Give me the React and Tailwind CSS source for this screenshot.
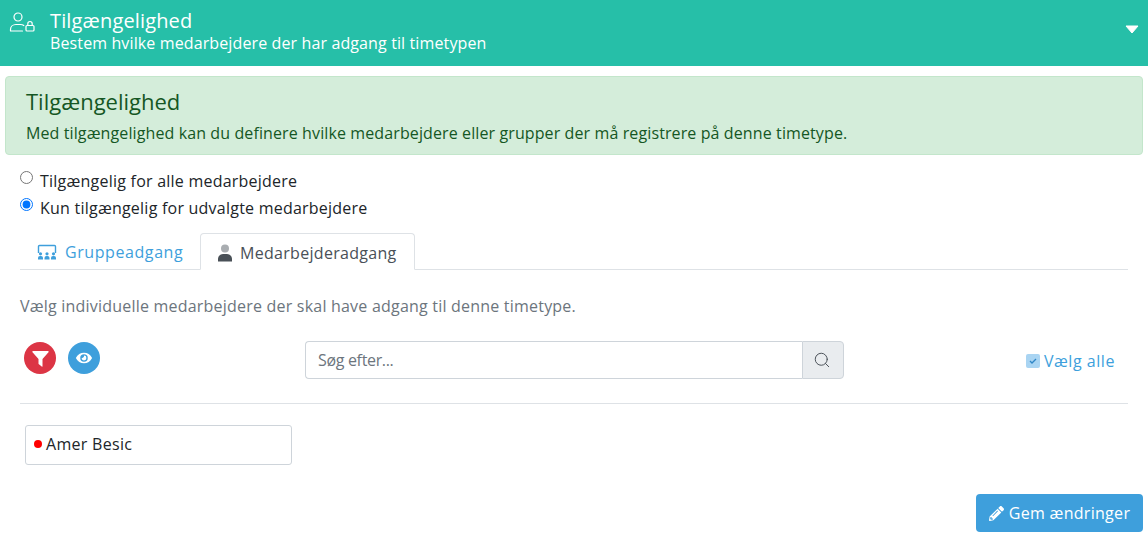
import { Search } from 'lucide-react'
import { FaPencilAlt } from 'react-icons/fa'

const UserLockIcon = () => (
  <svg width="28" height="24" viewBox="0 0 28 24" fill="none" stroke="white" strokeWidth="1.2" className="shrink-0 mt-[1px]">
    <circle cx="9" cy="7" r="4" />
    <path d="M1.5 21v-1.5c0-3 2.500-5 5.500-5h4.500c1.500 0 2.500.4 3.300 1M1.500 21h12" strokeLinecap="round" />
    <rect x="17" y="15.500" width="8" height="5.500" rx="1" />
    <path d="M18.800 15.500v-1.800a2.200 2.200 0 0 1 4.400 0v1.800" />
  </svg>
)

const GroupIcon = () => (
  <svg width="20" height="16" viewBox="0 0 20 16" className="shrink-0">
    <path d="M1.500 9V2.500a1 1 0 0 1 1-1h15a1 1 0 0 1 1 1V9" fill="none" stroke="#3e9fdc" strokeWidth="1.400" />
    {[3.500, 10, 16.500].map((x) => (
      <g key={x} fill="#3e9fdc">
        <circle cx={x} cy="9.800" r="1.600" />
        <path d={`M${x - 2.500} 15.500v-1.500a2 2 0 0 1 2-2h1a2 2 0 0 1 2 2v1.500z`} />
      </g>
    ))}
  </svg>
)

const PersonIcon = () => (
  <svg width="16" height="18" viewBox="0 0 16 18" className="shrink-0">
    <circle cx="8" cy="4.500" r="4" fill="#a9adb1" />
    <path d="M1 17.500v-2.500c0-3 2.500-5 5-5h4c2.500 0 5 2 5 5v2.500z" fill="#495057" />
  </svg>
)

const FunnelIcon = () => (
  <svg width="17" height="17" viewBox="0 0 17 17" fill="white">
    <path d="M1 1h15a.7.7 0 0 1 .5 1.200L10.500 9v7.200a.5.5 0 0 1-.8.4l-2.800-2.300a.8.8 0 0 1-.4-.7V9L.5 2.200A.7.7 0 0 1 1 1z" />
  </svg>
)

const EyeIcon = () => (
  <svg width="18" height="12" viewBox="0 0 20 14">
    <path d="M.5 7C2.500 3 6 .8 10 .8S17.500 3 19.500 7c-2 4-5.500 6.200-9.500 6.200S2.500 11 .5 7z" fill="white" />
    <circle cx="10" cy="7" r="4.400" fill="#3e9fdc" />
    <path d="M10 4.200A2.800 2.800 0 1 1 7.200 7c1 .5 3.300-.5 2.800-2.800z" fill="white" />
  </svg>
)

export default function App() {
  return (
    <div className="w-[1148px] h-[539px] overflow-hidden bg-white text-[16px] text-[#212529] font-['Open_Sans',sans-serif]">
      {/* Header */}
      <div className="h-[66px] bg-[#26bfa8] flex justify-between text-white">
        <div className="flex pl-[9px] pt-[9px] gap-[13px]">
          <UserLockIcon />
          <div>
            <div className="text-[20px] leading-[24px] tracking-[0.15px]">Tilgængelighed</div>
            <div className="text-[16px] leading-[20px] tracking-[0.12px]">Bestem hvilke medarbejdere der har adgang til timetypen</div>
          </div>
        </div>
        <svg width="14" height="9" viewBox="0 0 14 9" className="mt-[25px] mr-[9px]">
          <path d="M1 1h12L7 8z" fill="white" stroke="white" strokeLinejoin="round" />
        </svg>
      </div>

      <div className="px-[5px] pt-[10px]">
        <div className="h-[79px] rounded-[4px] bg-[#d4edda] border border-[#c3e6cb] text-[#155724] px-[20px] pt-[12px]">
          <div className="text-[22px] leading-[24px]">Tilgængelighed</div>
          <div className="mt-[8px] leading-[24px] tracking-[0.11px]">Med tilgængelighed kan du definere hvilke medarbejdere eller grupper der må registrere på denne timetype.</div>
        </div>

        {/* Radios */}
        <div className="pl-[15px] pt-[13px]">
          <label className="flex items-start h-[27px] gap-[7px]">
            <input type="radio" name="access" className="w-[13px] h-[13px] mt-[3px] accent-[#0075ff]" />
            <span className="leading-[26px] tracking-[0.23px]">Tilgængelig for alle medarbejdere</span>
          </label>
          <label className="flex items-start h-[27px] gap-[7px]">
            <input type="radio" name="access" defaultChecked className="w-[13px] h-[13px] mt-[3px] accent-[#0075ff]" />
            <span className="leading-[26px] tracking-[0.23px]">Kun tilgængelig for udvalgte medarbejdere</span>
          </label>
        </div>

        <div className="mx-[15px] mt-[11px]">
          {/* Tabs */}
          <div className="flex h-[37px] border-b border-[#dee2e6]">
            <div className="w-[180px] flex items-center gap-[8px] pl-[17px] pt-[2px] text-[#3e9fdc] tracking-[0.58px]">
              <GroupIcon />
              <span>Gruppeadgang</span>
            </div>
            <div className="h-[37px] w-[215px] flex items-center gap-[7px] pl-[16px] pt-[2px] border border-[#dee2e6] border-b-white rounded-t-[4px] bg-white text-[#495057] tracking-[0.3px]">
              <PersonIcon />
              <span>Medarbejderadgang</span>
            </div>
          </div>

          <p className="mt-[26px] leading-[20px] text-[#6c757d] tracking-[0.21px]">Vælg individuelle medarbejdere der skal have adgang til denne timetype.</p>

          {/* Toolbar */}
          <div className="flex items-start mt-[26px] h-[62px] border-b border-[#dee2e6]">
            <div className="flex gap-[12px] pl-[4px] w-[285px]">
              <button className="w-[32px] h-[32px] rounded-full bg-[#dc3545] flex items-center justify-center"><FunnelIcon /></button>
              <button className="w-[32px] h-[32px] rounded-full bg-[#3e9fdc] flex items-center justify-center"><EyeIcon /></button>
            </div>
            <div className="flex w-[539px] h-[38px] -mt-[1px]">
              <div className="flex-1 border border-r-0 border-[#ced4da] rounded-l-[4px] px-[12px] flex items-center text-[#6c757d] tracking-[-0.33px]">Søg efter...</div>
              <div className="w-[42px] bg-[#e9ecef] border border-[#ced4da] rounded-r-[4px] flex items-center justify-center pr-[2px]">
                <Search size={18} strokeWidth={1.300} className="text-[#495057]" />
              </div>
            </div>
            <label className="ml-auto mr-[13px] mt-[8px] flex items-center gap-[4px] text-[#3e9fdc] leading-[22px] tracking-[0.55px]">
              <span className="w-[14px] h-[14px] rounded-[2px] bg-[#a9d4f2] flex items-center justify-center">
                <svg width="8" height="6" viewBox="0 0 8 6" fill="none" stroke="#2f86c6" strokeWidth="1.300"><path d="M1 3l2 2 4-4" /></svg>
              </span>
              Vælg alle
            </label>
          </div>

          {/* Employee */}
          <div className="mt-[21px] ml-[5px] w-[267px] h-[40px] border border-[#ced4da] rounded-[3px] flex items-center pl-[8px] gap-[4px] pb-[2px] tracking-[0.3px]">
            <span className="w-[8px] h-[8px] rounded-full bg-[#ff0000]" />
            Amer Besic
          </div>
        </div>

        <div className="flex justify-end mt-[29px]">
          <button className="w-[167px] h-[38px] rounded-[4px] bg-[#3e9fdc] text-white flex items-center justify-center gap-[5px] tracking-[0.3px]">
            <FaPencilAlt size={15} />
            Gem ændringer
          </button>
        </div>
      </div>
    </div>
  )
}
